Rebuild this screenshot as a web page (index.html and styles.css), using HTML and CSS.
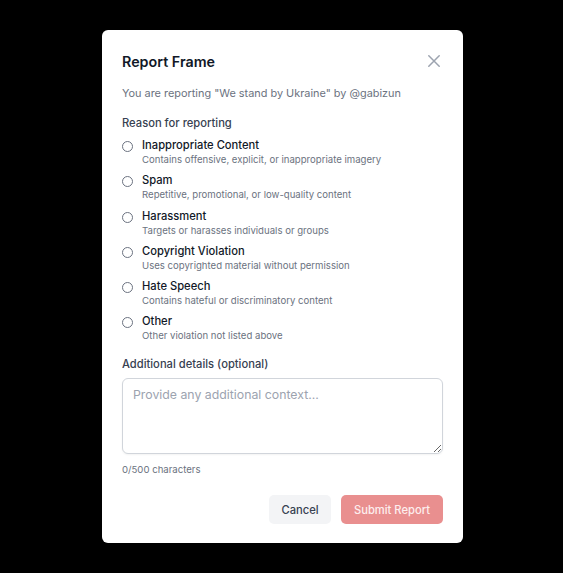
FILE: index.html
```html
<!DOCTYPE html>
<html>
<head>
<meta charset="utf-8">
<link rel="stylesheet" href="styles.css">
</head>
<body>
<div class="overlay">
  <div class="modal">
    <div class="header">
      <h2 class="title">Report Frame</h2>
      <button class="close" aria-label="Close">
        <svg width="12" height="12" viewBox="0 0 12 12" fill="none" stroke="#9ca3af" stroke-width="1.5" stroke-linecap="round"><path d="M0.8 0.8L11.2 11.2M11.2 0.8L0.8 11.2"/></svg>
      </button>
    </div>
    <p class="subtitle">You are reporting "We stand by Ukraine" by @gabizun</p>
    <div class="section-label">Reason for reporting</div>
    <div class="options">
      <label class="option"><span class="radio"></span><span class="opt-text"><span class="opt-title">Inappropriate Content</span><span class="opt-desc">Contains offensive, explicit, or inappropriate imagery</span></span></label>
      <label class="option"><span class="radio"></span><span class="opt-text"><span class="opt-title">Spam</span><span class="opt-desc">Repetitive, promotional, or low-quality content</span></span></label>
      <label class="option"><span class="radio"></span><span class="opt-text"><span class="opt-title">Harassment</span><span class="opt-desc">Targets or harasses individuals or groups</span></span></label>
      <label class="option"><span class="radio"></span><span class="opt-text"><span class="opt-title">Copyright Violation</span><span class="opt-desc">Uses copyrighted material without permission</span></span></label>
      <label class="option"><span class="radio"></span><span class="opt-text"><span class="opt-title">Hate Speech</span><span class="opt-desc">Contains hateful or discriminatory content</span></span></label>
      <label class="option"><span class="radio"></span><span class="opt-text"><span class="opt-title">Other</span><span class="opt-desc">Other violation not listed above</span></span></label>
    </div>
    <div class="section-label details-label">Additional details (optional)</div>
    <textarea class="details" placeholder="Provide any additional context..."></textarea>
    <div class="counter">0/500 characters</div>
    <div class="actions">
      <button class="btn cancel">Cancel</button>
      <button class="btn submit">Submit Report</button>
    </div>
  </div>
</div>
</body>
</html>
```
FILE: styles.css
```css
* { box-sizing: border-box; }
html, body { margin: 0; padding: 0; background: #000; }
body { font-family: Inter, "Noto Sans", sans-serif; color: #111827; }
.overlay {
  width: 563px; height: 573px;
  display: flex; align-items: flex-start; justify-content: center;
  padding-top: 30px; padding-left: 2px;
}
.modal {
  width: 361px;
  background: #fff;
  border-radius: 6px;
  padding: 20px 20px 19px 20px;
  display: flex; flex-direction: column;
}
.header { display: flex; align-items: center; justify-content: space-between; height: 22px; }
.title { margin: 0; font-size: 14.3px; font-weight: 600; color: #111827; }
.close { background: none; border: 0; padding: 0; width: 12px; height: 12px; display: flex; margin-right: 3px; cursor: pointer; }
.subtitle { margin: 12px 0 0; font-size: 10.9px; color: #6b7280; line-height: 18px; }
.section-label { font-size: 11.2px; font-weight: 500; color: #374151; margin-top: 13px; line-height: 16px; }
.options { display: flex; flex-direction: column; gap: 6.3px; margin-top: 7px; }
.option { display: flex; align-items: flex-start; gap: 9px; }
.radio { width: 11px; height: 11px; border: 1px solid #6b7280; border-radius: 50%; margin-top: 3px; flex: none; }
.opt-text { display: flex; flex-direction: column; }
.opt-title { font-size: 11.2px; font-weight: 500; color: #111827; line-height: 15px; }
.opt-desc { font-size: 9.6px; color: #6b7280; line-height: 14px; }
.details-label { margin-top: 13px; }
.details {
  display: block;
  margin-top: 6px;
  height: 76px; width: 100%;
  border: 1px solid #d1d5db; border-radius: 6px;
  padding: 8px 10px;
  font-family: inherit; font-size: 12.3px; color: #111827;
  resize: vertical;
  box-shadow: 0 1px 2px rgba(0,0,0,0.05);
}
.details::placeholder { color: #9ca3af; }
.counter { margin-top: 9px; font-size: 9.6px; color: #6b7280; line-height: 14px; }
.actions { display: flex; justify-content: flex-end; gap: 10px; margin-top: 18px; }
.btn { border: 0; border-radius: 5px; height: 29px; font-family: inherit; font-size: 11.2px; font-weight: 500; padding: 0; white-space: nowrap; }
.cancel { background: #f3f4f6; color: #374151; width: 62px; }
.submit { background: #e98f8f; color: #fdeeee; width: 102px; }
```
